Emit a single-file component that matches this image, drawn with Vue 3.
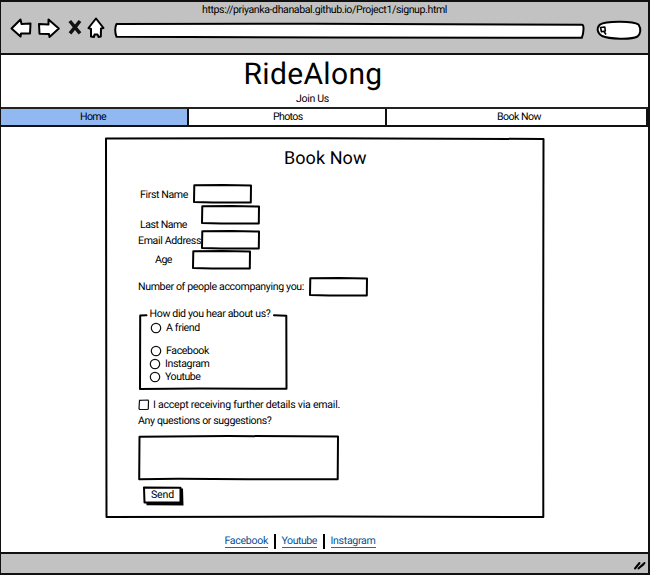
<script setup>
const nav = [
  { label: 'Home', w: 26, cls: 'home' },
  { label: 'Photos', w: 29.5, cls: 'photos' },
  { label: 'Book Now', w: 44, cls: 'book' },
]
const fields = [
  { label: 'First Name', w: 48, cls: 'first' },
  { label: 'Last Name', w: 47, cls: 'last' },
  { label: 'Email Address', w: 63, cls: 'email' },
  { label: 'Age', w: 17, cls: 'age' },
  { label: 'Number of people accompanying you:', w: 166, cls: 'count' },
]
const sources = [
  { label: 'A friend', w: 34, cls: 'friend' },
  { label: 'Facebook', w: 43, cls: 'facebook' },
  { label: 'Instagram', w: 44.5, cls: 'instagram' },
  { label: 'Youtube', w: 35.5, cls: 'youtube' },
]
const links = [
  { label: 'Facebook', w: 43.5 },
  { label: 'Youtube', w: 35.5 },
  { label: 'Instagram', w: 45 },
]

// Spreads the letters of a label so that it takes the given width.
const vFit = {
  mounted(el, { value }) {
    const natural = el.getBoundingClientRect().width
    el.style.letterSpacing = `${(value - natural) / el.textContent.length}px`
  },
}
</script>

<template>
  <div class="window">
    <header class="chrome">
      <div class="url"><span v-fit="245">https://priyanka-dhanabal.github.io/Project1/signup.html</span></div>
      <div class="tools">
        <svg class="arrows" width="96" height="24" viewBox="0 0 96 24">
          <g class="ink white">
            <path d="M1.5 12.5 10.5 3.5 11.5 8 20.5 7.5 20 17.5 11 17.5 10.5 20.5Z" />
            <path d="M29 8 38.5 8.5 38.5 3.5 48.8 12.5 39.5 21 39 18 29.5 17.8Z" />
            <path d="M86 2.5 93.5 12 91 12.5 90.8 20.5 88.5 21 87.5 18.5 84.5 18.5 84 21 81 20.5 81 13 78.5 12Z" />
          </g>
          <path class="cross" d="M59.800 5 70 17.300M70 5 60 17.300" />
        </svg>
        <svg class="address" width="472" height="18" viewBox="0 0 472 18">
          <path class="ink white" d="M2.5 2 200 1.8 468 2.7 C470.5 2.5 469.5 12 467.8 15.8 L220 15.6 2.5 14.8 C.8 11 .8 5 2.5 2Z" />
        </svg>
        <svg class="search" width="48" height="22" viewBox="0 0 48 22">
          <path class="ink white" d="M4 4.5C9 1 37 .5 42.500 4.500 45.500 9 44.500 14 41.500 16.500 35 20 13 19 6 16 1 13 .3 8 4 4.500Z" />
          <path class="lens" d="M4.500 7.500 8.800 7 9.300 11 5.500 11.800ZM8 11.500 10 14.500" />
        </svg>
      </div>
    </header>

    <div class="banner">
      <h1><span v-fit="139">RideAlong</span></h1>
      <p><span v-fit="33">Join Us</span></p>
    </div>

    <nav class="nav">
      <a v-for="n in nav" :key="n.label" :class="n.cls"><span v-fit="n.w">{{ n.label }}</span></a>
    </nav>

    <main class="main">
      <section class="panel">
        <svg class="outline" width="440" height="381" viewBox="0 0 440 381">
          <path class="ink" d="M1 1.500 220 1.200 438.500 2 438.200 200 438.300 380 220 379.500 1.500 380 1.200 180Z" />
        </svg>
        <h2><span v-fit="82.500">Book Now</span></h2>

        <div v-for="f in fields" :key="f.label" class="field" :class="f.cls">
          <label><span v-fit="f.w">{{ f.label }}</span></label>
          <svg width="59" height="20" viewBox="0 0 59 20">
            <path class="ink white" d="M1.300 1.200 30 .9 58 1.500 57.800 18.500 20 18.500 1 18Z" />
          </svg>
        </div>

        <div class="group">
          <svg class="outline" width="149" height="77" viewBox="0 0 149 77">
            <path class="ink" d="M7.500 2.300 1.200 2.600 1 76 60 75.500 147.500 75.800 147.300 2.800 135 2.300" />
          </svg>
          <div class="legend"><span v-fit="121">How did you hear about us?</span></div>
          <div v-for="s in sources" :key="s.label" class="option" :class="s.cls">
            <svg width="12" height="12" viewBox="0 0 12 12"><circle class="thin" cx="6" cy="6" r="4.700" /></svg>
            <label><span v-fit="s.w">{{ s.label }}</span></label>
          </div>
        </div>

        <div class="accept">
          <svg width="12" height="12" viewBox="0 0 12 12"><path class="thin" d="M1.500 1.300 10 1 10.500 2 10.300 10 9.500 10.500 1.500 10.300 1 9.500Z" /></svg>
          <label><span v-fit="187">I accept receiving further details via email.</span></label>
        </div>
        <div class="question"><span v-fit="133.500">Any questions or suggestions?</span></div>
        <svg class="area" width="202" height="46" viewBox="0 0 202 46">
          <path class="ink white" d="M1.500 1.800 90 1 200 1.500 199.700 44.300 110 44.300 40 43.800 1.200 44.300Z" />
        </svg>
        <div class="send">
          <svg class="outline" width="42" height="20" viewBox="0 0 42 20">
            <path d="M3 3 40 2.500 40.500 19.500 3.500 19.300Z" />
            <path class="ink white" d="M1 1.500 37.500 1.800 37.500 16.200 1.500 16.500Z" />
          </svg>
          <span v-fit="23">Send</span>
        </div>
      </section>

      <div class="links">
        <a v-for="l in links" :key="l.label"><span v-fit="l.w">{{ l.label }}</span></a>
      </div>
    </main>

    <footer class="status">
      <svg width="14" height="12" viewBox="0 0 14 12"><path class="grip" d="M2 9.500 6.500 4M5.500 9.500 11.500 4M6.500 8.500 10.500 5.500" /></svg>
    </footer>
  </div>
</template>

<style>
body { background: #fff; }
</style>

<style scoped>
.window {
  box-sizing: border-box;
  width: 650px;
  height: 575px;
  border: 2px solid #111;
  border-left-width: 1px;
  display: flex;
  flex-direction: column;
  font: 10.600px/14px Roboto, "Liberation Sans", sans-serif;
  color: #000;
  text-rendering: geometricPrecision;
  white-space: nowrap;
}
span { display: inline-block; white-space: nowrap; }
h1, h2, p { margin: 0; font-weight: 400; }
svg { display: block; flex: none; overflow: visible; }
.ink { fill: none; stroke: #000; stroke-width: 2; stroke-linejoin: round; stroke-linecap: round; }
.white { fill: #fff; }
.cross { fill: none; stroke: #111; stroke-width: 3.500; }
.lens { fill: #fff; stroke: #000; stroke-width: 1.600; stroke-linejoin: round; }
.thin { fill: #fff; stroke: #111; stroke-width: 1.200; }
.grip { fill: none; stroke: #000; stroke-width: 2; stroke-linecap: round; }
.outline { position: absolute; left: 0; top: 0; }

.chrome { height: 51px; background: #c2c2c2; border-bottom: 2px solid #111; }
.url { height: 13px; padding: 1px 0 0 201px; }
.tools { display: flex; padding-left: 9px; }
.address { margin: 6px 0 0 8px; }
.search { margin: 4px 0 0 10px; }

.banner { height: 52px; display: flex; flex-direction: column; }
h1 { font-size: 30px; line-height: 34px; padding: 3px 0 0 242.500px; }
.banner p { padding-left: 295px; }

.nav { display: flex; height: 16px; border-top: 2px solid #222; border-bottom: 2px solid #111; }
.nav a { box-sizing: border-box; border-right: 2px solid #111; line-height: 15px; }
.nav .home { width: 188px; background: #92b8f2; padding-left: 79px; }
.nav .photos { width: 198px; padding-left: 84px; }
.nav .book { flex: 1; padding-left: 110px; }

.main { flex: 1; padding: 10px 0 0 104px; }
.panel { position: relative; width: 440px; height: 381px; }
h2 { font-size: 18px; line-height: 24px; height: 37px; padding: 10px 0 0 179px; }

.field { display: flex; }
.field label { box-sizing: border-box; }
.first { height: 21px; }
.first label { width: 88px; padding: 4px 0 0 35px; }
.last { height: 25px; }
.last label { width: 96px; padding: 13px 0 0 35px; }
.email { height: 20px; }
.email label { width: 96px; padding: 4px 0 0 33px; }
.age { height: 27px; }
.age label { width: 87px; padding: 3px 0 0 50px; }
.count { height: 29px; }
.count label { width: 204px; padding: 3px 0 0 33px; }

.group { position: relative; height: 92px; margin-left: 34px; margin-top: 7px; }
.group > .outline { top: 6px; }
.legend { height: 8px; padding-left: 10.500px; }
.group .legend { margin-top: -6px; }
.option { display: flex; align-items: center; height: 14px; padding-left: 11px; gap: 4px; }
.friend { padding-top: 6px; }
.facebook { padding-top: 9px; }
.instagram { height: 12px; padding-left: 10px; }
.youtube { height: 13px; padding-left: 10px; }

.accept { display: flex; align-items: center; padding-left: 33px; gap: 3px; height: 14px; margin-top: -1px; }
.question { padding: 2px 0 0 33px; }
.area { margin: 7px 0 0 33px; }
.send { position: relative; width: 42px; height: 20px; margin: 5px 0 0 38px; }
.send span { position: relative; margin: 2px 0 0 8px; }

.links { display: flex; margin-top: 16px; padding-left: 119.500px; color: #0b4f91; }
.links a { height: 15px; line-height: 14px; }
.links a + a { border-left: 2px solid #000; margin-left: 5.500px; padding-left: 6px; }
.links span { border-bottom: 1px solid #2767a4; line-height: 12px; }

.status { box-sizing: border-box; height: 21px; background: #c2c2c2; border-top: 2px solid #111; display: flex; justify-content: flex-end; padding: 5px 1px 0 0; }
</style>
